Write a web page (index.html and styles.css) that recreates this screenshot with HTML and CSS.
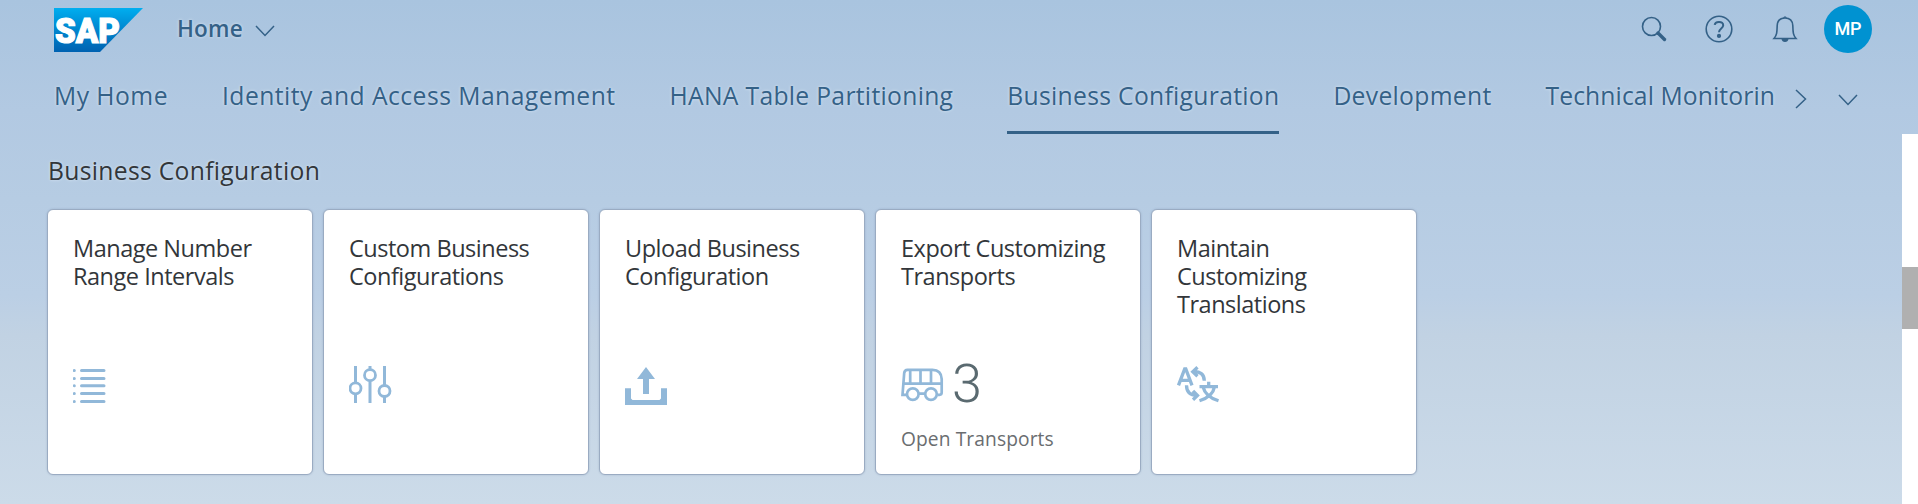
FILE: index.html
```html
<!DOCTYPE html>
<html lang="en">
<head>
<meta charset="utf-8">
<title>Home</title>
<link rel="stylesheet" href="styles.css">
</head>
<body>
<header class="shell">
  <svg class="logo" viewBox="0 0 90 44" width="90" height="44">
    <defs><linearGradient id="sap" x1="0" y1="0" x2="0" y2="1"><stop offset="0" stop-color="#00aeef"/><stop offset=".5" stop-color="#0085ce"/><stop offset="1" stop-color="#0062b1"/></linearGradient></defs>
    <path d="M0 0H89L46 44H0Z" fill="url(#sap)"/>
    <text class="logo-text" x="1" y="35" textLength="65" lengthAdjust="spacingAndGlyphs">SAP</text>
  </svg>
  <span class="title">Home</span>
  <svg class="chev" width="20" height="14" viewBox="0 0 20 14"><path d="M1 2L10 11.500L19 2"/></svg>
  <div class="actions">
    <svg class="line" width="26" height="26" viewBox="0 0 26 26"><circle cx="10.500" cy="10.500" r="9"/><path d="M17 17L23.500 23.500" stroke-width="3.400" stroke-linecap="round"/></svg>
    <svg class="line" width="28" height="28" viewBox="0 0 28 28"><circle cx="14" cy="14" r="12.800"/><path d="M9.700 9.800C10.200 5.800 18.500 5.800 18.200 10.500C18 13.500 14 13.500 14 17.300" stroke-width="2"/><circle cx="14" cy="20.900" r="1.300" class="dot"/></svg>
    <svg class="line" width="26" height="28" viewBox="0 0 26 28"><path d="M2 23.500C5 20 5 17 5.200 10.500C5.500 5.500 8.500 3 13 3S20.500 5.500 20.800 10.500C21 17 21 20 24 23.500Z"/><path class="dot" d="M11 2.800Q13-.5 15 2.800ZM9.500 24H16.500Q16 27 13 27T9.500 24Z" stroke="none"/></svg>
    <span class="avatar">MP</span>
  </div>
</header>
<nav class="tabs">
  <div class="tab-list">
    <a class="tab wide">My Home</a>
    <a class="tab wide">Identity and Access Management</a>
    <a class="tab">HANA Table Partitioning</a>
    <a class="tab active">Business Configuration</a>
    <a class="tab">Development</a>
    <a class="tab tight">Technical Monitorin</a>
  </div>
  <svg class="chev next" width="12" height="20" viewBox="0 0 12 20"><path d="M1 1L10.500 10L1 19"/></svg>
  <svg class="chev more" width="20" height="14" viewBox="0 0 20 14"><path d="M1 2L10 11.500L19 2"/></svg>
</nav>
<main class="content">
  <div class="page">
    <h1 class="heading">Business Configuration</h1>
    <div class="tiles">
      <section class="tile">
        <h2>Manage Number<br>Range Intervals</h2>
        <div class="kpi"><svg class="icon" width="43" height="44" viewBox="0 0 43 44"><path d="M8.500 6.500H31M8.500 14.500H31M8.500 21.700H31M8.500 29.600H31M8.500 37.600H31" stroke-width="3" stroke-linecap="round"/><path d="M1.300 6.500h.01M1.300 14.500h.01M1.300 21.700h.01M1.300 29.600h.01M1.300 37.600h.01" stroke-width="3" stroke-linecap="round"/></svg></div>
      </section>
      <section class="tile">
        <h2>Custom Business<br>Configurations</h2>
        <div class="kpi"><svg class="icon" width="43" height="44" viewBox="0 0 43 44"><path stroke-width="3" d="M6.500 2V19M6.500 30V39M21 2V6M21 17V39M35.500 2V21.500M35.500 33V39"/><g stroke-width="2.800"><circle cx="6.500" cy="24.300" r="5.500"/><circle cx="21" cy="11.200" r="5.500"/><circle cx="35.500" cy="27" r="5.500"/></g></svg></div>
      </section>
      <section class="tile">
        <h2>Upload Business<br>Configuration</h2>
        <div class="kpi"><svg class="icon solid" width="43" height="44" viewBox="0 0 43 44"><path d="M21 3L30 15H24V30H18V15H12ZM0 24.300H6V34.500L7.500 36H34.500L36 34.500V24.300H42V41H0Z"/></svg></div>
      </section>
      <section class="tile">
        <h2>Export Customizing<br>Transports</h2>
        <div class="kpi"><svg class="icon" width="43" height="44" viewBox="0 0 43 44"><g stroke-width="2.700" transform="translate(0 -.4)"><path d="M5.500 31.200H1.500L3.200 9.500Q3.500 6.200 6.500 6.200H31.500C37.500 6.200 40.500 10 40.700 15.500V29Q40.700 31.200 38.500 31.200H36.500M18 30H24.500M2.500 20H40.500M9.200 6.200V20M19.500 6.200V20M30 6.200V20"/><circle cx="11.800" cy="30.500" r="5.800"/><circle cx="30" cy="30.500" r="5.800"/></g></svg><span class="value">3</span></div>
        <p class="note">Open Transports</p>
      </section>
      <section class="tile">
        <h2>Maintain<br>Customizing<br>Translations</h2>
        <div class="kpi"><svg class="icon" width="43" height="44" viewBox="0 0 43 44"><g stroke-width="3.300" transform="translate(0 -1.200)"><path d="M1.500 22.500L7.700 6H8.800L15 22.500M4 17.500H13"/><path d="M20.500 4.500L15.800 8.900L20.500 13.500M16.500 8.900C23 8.500 27.300 11.500 27.300 18M9.500 22.500C9.500 29 13 32.500 20 32.500M16 28L20.500 32.700L16 37"/><path d="M22.500 23.800H41M31.700 19V24M37.500 24C36.500 30 32 35 22.500 38M26 24C27.500 30 32 35 41.500 38"/></g></svg></div>
      </section>
    </div>
  </div>
  <div class="scrollbar"><div class="thumb"></div></div>
</main>
</body>
</html>
```
FILE: styles.css
```css
* { box-sizing: border-box; }
body {
  margin: 0;
  height: 504px;
  overflow: hidden;
  display: flex;
  flex-direction: column;
  background: linear-gradient(#a9c4df 0, #b2c9e2 110px, #b6cce3 200px, #bbcfe5 295px, #c1d2e3 335px, #ccdbe9 504px);
  font-family: "Open Sans", "Noto Sans", sans-serif;
  color: #32363a;
}
svg { display: block; flex: none; fill: none; }
.shell { display: flex; height: 58px; padding: 0 46px 0 54px; flex: none; }
.logo { margin-top: 8px; }
.logo-text { font: 900 35px Roboto, sans-serif; fill: #fff; stroke: #fff; stroke-width: 1.200; }
.title {
  margin-left: 33px;
  width: 66px;
  font-size: 22.500px;
  font-weight: 600;
  line-height: 58px;
  letter-spacing: .2px;
  color: #346187;
  text-shadow: 0 0 3px #dbe8f5;
}
.chev { stroke: #346187; stroke-width: 1.500; }
.shell .chev { margin: 24px 0 0 12px; }
.actions { display: flex; align-items: center; margin-left: auto; }
.line { stroke: #346187; stroke-width: 1.600; }
.dot { fill: #346187; }
.line:nth-child(2) { margin-left: 38px; }
.line:nth-child(3) { margin-left: 39px; }
.avatar {
  width: 48px;
  height: 48px;
  margin-left: 26px;
  border-radius: 50%;
  background: #0092d1;
  color: #fff;
  font: 500 18px/48px Roboto, sans-serif;
  text-align: center;
}
.tabs { display: flex; height: 76px; flex: none; padding-left: 54px; }
.tab-list { display: flex; gap: 54px; width: 1722px; overflow: hidden; flex: none; }
.tab {
  flex: none;
  height: 76px;
  padding-top: 16px;
  font-size: 24.700px;
  line-height: 44px;
  white-space: nowrap;
  letter-spacing: .3px;
  color: #346187;
  text-shadow: 0 0 3px #dbe8f5;
}
.wide { letter-spacing: .46px; }
.tight { letter-spacing: .1px; }
.active { border-bottom: 3px solid #346187; }
.next { margin: 31px 0 0 19px; }
.more { margin: 35px 0 0 31px; }
.content { display: flex; flex: 1; }
.page { flex: 1; padding: 15px 0 0 47px; }
.heading {
  margin: 0;
  font-size: 24.700px;
  font-weight: 400;
  line-height: 44px;
  letter-spacing: .3px;
  padding-left: 1px;
  text-shadow: 0 0 3px #dbe8f5;
}
.tiles { display: flex; gap: 10px; margin-top: 16px; }
.tile {
  width: 266px;
  height: 266px;
  padding: 24px 0 0 25px;
  border: 1px solid #9aabc2;
  border-radius: 6px;
  background: #fff;
  box-shadow: 0 0 2px rgba(80, 110, 150, .3);
}
.tile h2 { margin: 0; height: 125px; font-size: 23.500px; font-weight: 400; line-height: 28px; letter-spacing: -.48px; white-space: nowrap; }
.kpi { display: flex; height: 48px; gap: 8px; }
.icon { stroke: #91b8d9; margin-top: 5px; }
.solid { fill: #91b8d9; stroke: none; }
.value { font-family: Roboto, sans-serif; font-size: 54px; font-weight: 300; line-height: 50px; color: #5a6a70; }
.note { margin: 18px 0 0; font-size: 19.200px; line-height: 28px; letter-spacing: .1px; color: #6a6d70; }
.scrollbar { width: 16px; background: #fff; padding-top: 133px; }
.thumb { height: 62px; background: #b0b0b0; }
```
